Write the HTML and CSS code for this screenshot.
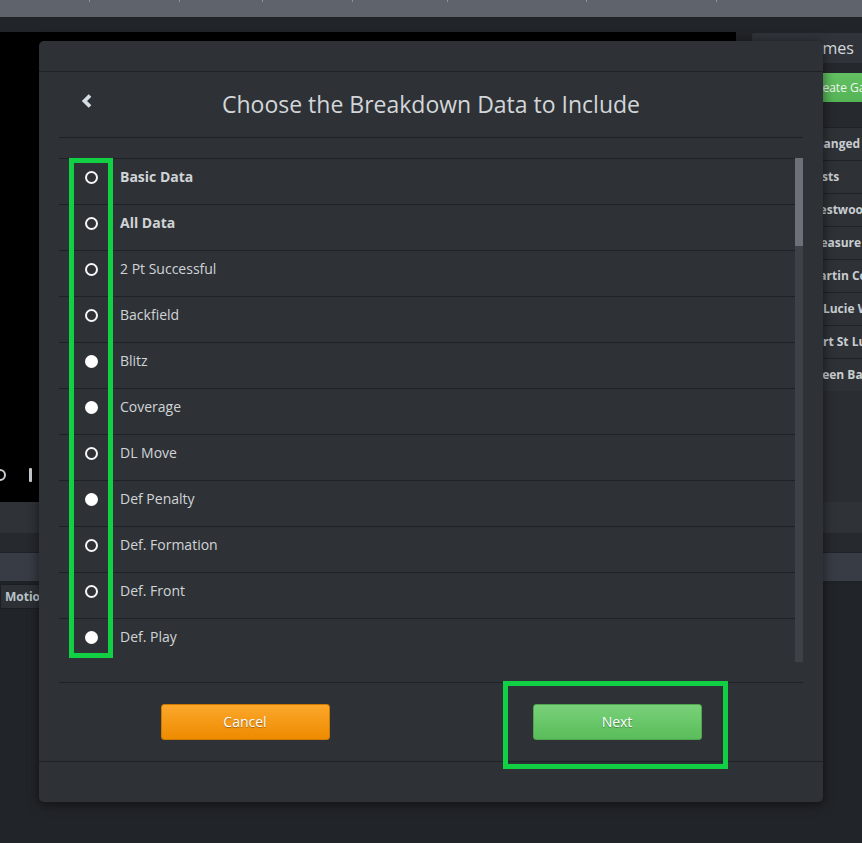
FILE: index.html
```html
<!DOCTYPE html>
<html lang="en">
<head>
<meta charset="utf-8">
<title>Choose the Breakdown Data to Include</title>
<link rel="stylesheet" href="styles.css">
</head>
<body>
<div class="app">
  <div class="topbar">
    <span class="tick w90"></span><span class="tick w90"></span><span class="tick w83"></span><span class="tick w90"></span><span class="tick w95"></span><span class="tick w139"></span><span class="tick w130"></span>
  </div>
  <div class="subbar"></div>
  <div class="main">
    <div class="video">
      <div class="controls">
        <svg class="ctl-rot" width="8" height="14" viewBox="0 0 8 14"><path d="M0 2 A5 5 0 0 1 0 12" fill="none" stroke="#c9ccd0" stroke-width="2"/></svg>
        <span class="ctl-bar"></span>
      </div>
    </div>
    <div class="gutter"></div>
    <aside class="side">
      <div class="side-tab">
        <svg class="side-icon" width="10" height="10" viewBox="0 0 10 10"><circle cx="5" cy="5" r="3.5" fill="none" stroke="#c9ccd0" stroke-width="1.5"/></svg>
        <span>Games</span>
      </div>
      <div class="side-strip"></div>
      <div class="side-create">Create Game</div>
      <div class="side-gap"></div>
      <ul class="side-list">
        <li>Changed Games</li>
        <li>Tests</li>
        <li>Westwood</li>
        <li>Treasure Coast</li>
        <li>Martin County</li>
        <li>St Lucie West</li>
        <li>Port St Lucie</li>
        <li>Green Bay</li>
      </ul>
    </aside>
  </div>
  <div class="strip-a"></div>
  <div class="strip-b"></div>
  <div class="strip-c"></div>
  <div class="tabs-row"><span class="motion-tab">Motion</span></div>
</div>

<div class="modal">
  <div class="modal-top"></div>
  <div class="modal-head">
    <svg class="back" width="14" height="16" viewBox="0 0 14 16"><path d="M10 2.5 L4.5 8 L10 13.5" fill="none" stroke="#d6dde4" stroke-width="3.8" stroke-linejoin="miter"/></svg>
    <h1 class="title">Choose the Breakdown Data to Include</h1>
    <span></span>
  </div>
  <div class="list-wrap">
    <ul class="list">
      <li class="row"><span class="radio"></span><span class="label bold">Basic Data</span></li>
      <li class="row"><span class="radio"></span><span class="label bold">All Data</span></li>
      <li class="row"><span class="radio"></span><span class="label">2 Pt Successful</span></li>
      <li class="row"><span class="radio"></span><span class="label">Backfield</span></li>
      <li class="row"><span class="radio on"></span><span class="label">Blitz</span></li>
      <li class="row"><span class="radio on"></span><span class="label">Coverage</span></li>
      <li class="row"><span class="radio"></span><span class="label">DL Move</span></li>
      <li class="row"><span class="radio on"></span><span class="label">Def Penalty</span></li>
      <li class="row"><span class="radio"></span><span class="label">Def. Formation</span></li>
      <li class="row"><span class="radio"></span><span class="label">Def. Front</span></li>
      <li class="row"><span class="radio on"></span><span class="label">Def. Play</span></li>
      <li class="row"><span class="radio"></span><span class="label">Def. Strength</span></li>
    </ul>
    <div class="scrollbar"><div class="thumb"></div></div>
    <div class="hl hl-radios"></div>
  </div>
  <div class="modal-foot">
    <div class="btn-cell"><button class="btn cancel">Cancel</button></div>
    <div class="btn-cell"><button class="btn next">Next</button></div>
  </div>
  <div class="modal-bottom"></div>
  <div class="hl hl-next"></div>
</div>
</body>
</html>
```

FILE: styles.css
```css
* { box-sizing: border-box; }
html, body { margin: 0; padding: 0; }
body {
  background: #212428;
  font-family: "Open Sans", "Noto Sans", sans-serif;
  width: 862px;
  height: 843px;
  overflow: hidden;
  position: relative;
}
ul { list-style: none; margin: 0; padding: 0; }

.app { width: 862px; }

.topbar {
  height: 17px;
  background: #5f636b;
  display: flex;
  align-items: flex-start;
}
.tick { height: 2px; border-right: 1px solid #8e929a; }
.w90 { width: 90px; }
.w83 { width: 83px; }
.w95 { width: 95px; }
.w139 { width: 139px; }
.w130 { width: 130px; }

.subbar { height: 15px; background: #212428; }

.main {
  display: grid;
  grid-template-columns: 736px 16px 110px;
  height: 470px;
}
.video {
  background: #000;
  display: flex;
  align-items: flex-end;
}
.controls {
  display: flex;
  align-items: center;
  gap: 21px;
  height: 22px;
  margin-bottom: 16px;
}
.ctl-rot { display: block; }
.ctl-bar { width: 3px; height: 14px; background: #c9ccd0; border-radius: 1px; }
.gutter { background: #212428; }

.side {
  margin-top: 1px;
  background: #2a2d31;
  display: flex;
  flex-direction: column;
}
.side-tab {
  height: 30px;
  background: #30343a;
  border-radius: 4px 0 0 0;
  display: flex;
  align-items: center;
  padding-left: 30px;
  gap: 10px;
  color: #d6d9dc;
  font-size: 16px;
}
.side-icon { display: block; }
.side-strip { height: 10px; background: #25282c; }
.side-create {
  height: 29px;
  background: linear-gradient(#62c062, #55b455);
  color: #eef7ee;
  font-size: 12px;
  line-height: 29px;
  padding-left: 58px;
  white-space: nowrap;
  overflow: hidden;
}
.side-gap { height: 25px; background: #26292d; }
.side-list li {
  height: 33px;
  border-top: 1px solid #1f2226;
  background: #2e3236;
  color: #c9cdd1;
  font-size: 12px;
  font-weight: 700;
  line-height: 31px;
  padding-left: 56px;
  white-space: nowrap;
  overflow: hidden;
}

.strip-a { height: 31px; background: #2f3337; }
.strip-b { height: 20px; background: #26292d; border-bottom: 1px solid #1f2226; }
.strip-c { height: 31px; background: #383c44; border-bottom: 3px solid #1f2226; }
.tabs-row { height: 26px; background: #212428; display: flex; }
.motion-tab {
  background: #2d3135;
  border: 1px solid #1c1f22;
  color: #b9c3cc;
  font-size: 12px;
  font-weight: 700;
  padding: 3px 8px 0 4px;
  height: 25px;
}

/* Modal */
.modal {
  position: absolute;
  left: 39px;
  top: 41px;
  width: 784px;
  height: 761px;
  background: #2e3236;
  border-radius: 5px;
  box-shadow: 0 2px 12px rgba(0, 0, 0, 0.55);
  display: flex;
  flex-direction: column;
}
.modal-top {
  height: 31px;
  border-bottom: 1px solid #1e2125;
}
.modal-head {
  height: 66px;
  margin: 0 20px;
  border-bottom: 1px solid #1e2125;
  display: grid;
  grid-template-columns: 1fr auto 1fr;
  align-items: center;
  padding-bottom: 1px;
}
.back { display: block; margin-left: 21px; margin-top: -7px; }
.title {
  margin: 0;
  font-size: 23px;
  font-weight: 400;
  color: #d3d6d9;
}

.list-wrap {
  position: relative;
  margin: 20px 20px 0;
  height: 504px;
  display: flex;
}
.list {
  flex: 1;
  overflow: hidden;
}
.row {
  height: 46px;
  border-top: 1px solid #1e2125;
  display: flex;
  align-items: flex-start;
  padding: 8px 0 0 26px;
}
.radio {
  width: 13px;
  height: 13px;
  border-radius: 50%;
  border: 2px solid #f4f6f8;
  margin-top: 4px;
  flex: none;
}
.radio.on { background: #ffffff; border-color: #ffffff; }
.label {
  margin-left: 22px;
  font-size: 14px;
  line-height: 19px;
  color: #d1d4d7;
}
.label.bold { font-weight: 700; }

.scrollbar {
  width: 8px;
  background: #3d4148;
  flex: none;
}
.thumb { height: 88px; background: #6c7078; }

.hl {
  position: absolute;
  border: 5px solid #11d044;
  pointer-events: none;
}
.hl-radios { left: 10px; top: 0; width: 44px; height: 500px; }
.hl-next { left: 464px; top: 640px; width: 225px; height: 88px; }

.modal-foot {
  margin: 20px 20px 0;
  border-top: 1px solid #1e2125;
  height: 79px;
  display: grid;
  grid-template-columns: 1fr 1fr;
  align-items: start;
  padding-top: 21px;
}
.btn-cell { display: flex; justify-content: center; }
.btn {
  width: 169px;
  height: 36px;
  border-radius: 3px;
  font-family: "Open Sans", "Noto Sans", sans-serif;
  font-size: 14px;
  color: #ffffff;
  text-shadow: 0 1px 1px rgba(0, 0, 0, 0.35);
  padding: 0 0 2px;
  cursor: pointer;
}
.cancel {
  background: linear-gradient(#fca72c, #ee8b00);
  border: 1px solid #d07a00;
}
.next {
  background: linear-gradient(#79d179, #5abd5a);
  border: 1px solid #4fa64f;
}
.modal-bottom {
  border-top: 1px solid #1e2125;
  height: 41px;
}
```
